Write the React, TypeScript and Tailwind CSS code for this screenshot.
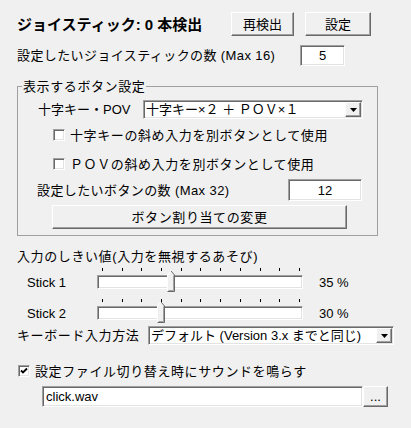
import React from "react";

const raised =
  "border border-t-white border-l-white border-b-[#696969] border-r-[#696969] bg-[#f0f0f0] shadow-[inset_-1px_-1px_0_#a0a0a0]";
const sunken =
  "border border-t-[#a0a0a0] border-l-[#a0a0a0] border-b-white border-r-white bg-white shadow-[inset_1px_1px_0_#696969,inset_-1px_-1px_0_#e3e3e3]";

function WinButton({ label, className }: { label: string; className: string }) {
  return (
    <button className={`${raised} ${className} flex items-center justify-center text-[13px] leading-none`}>
      {label}
    </button>
  );
}

function TextBox({ value, className, center }: { value: string; className: string; center?: boolean }) {
  return (
    <div className={`${sunken} ${className} flex items-center px-[3px] text-[13px] leading-none ${center ? "justify-center" : ""}`}>
      {value}
    </div>
  );
}

function Combo({ value, className }: { value: string; className: string }) {
  return (
    <div className={`${sunken} ${className} flex items-stretch p-[1px]`}>
      <div className="flex-1 flex items-center pl-[1px] text-[13px] leading-none whitespace-nowrap overflow-hidden">{value}</div>
      <div className={`${raised} w-[16px] flex items-center justify-center`}>
        <svg width="7" height="4" viewBox="0 0 7 4">
          <path d="M0 0H7L3.5 4Z" fill="#000" />
        </svg>
      </div>
    </div>
  );
}

function CheckBox({ checked, label, className }: { checked?: boolean; label: string; className: string }) {
  return (
    <div className={`flex items-center h-[14px] ${className}`}>
      <div className={`${sunken} w-[12px] h-[12px] flex items-center justify-center`}>
        {checked && (
          <svg width="8" height="8" viewBox="0 0 8 8">
            <path d="M1 3.5L3 5.5L7 1.5" stroke="#000" strokeWidth="1.8" fill="none" />
          </svg>
        )}
      </div>
      <span className="ml-[5px] text-[13px] leading-none tracking-[0.6px] whitespace-nowrap">{label}</span>
    </div>
  );
}

function Slider({ value }: { value: number }) {
  const left = 5 + (value / 100) * 197 - 4;
  return (
    <div className="relative w-[206px]">
      <div className="flex justify-between pl-[5px] pr-[3px] h-[4px]">
        {Array.from({ length: 11 }).map((_, i) => (
          <div key={i} className="w-[1px] h-[3px] mt-[1px] bg-black" />
        ))}
      </div>
      <div className={`${sunken} mt-[4px] h-[14px]`} />
      <svg className="absolute top-[3px]" style={{ left }} width="8" height="22" viewBox="0 0 8 22">
        <path d="M0.5 21.5V5L4 1L7.5 5V21.5Z" fill="#f0f0f0" />
        <path d="M0.5 21V5L4 1" stroke="#fff" fill="none" />
        <path d="M4 1L7.5 5V21.5H0.5" stroke="#696969" fill="none" />
        <path d="M6.5 5.5V20.5H1.5" stroke="#a0a0a0" fill="none" />
      </svg>
    </div>
  );
}

export default function App() {
  return (
    <div className="w-[411px] h-[428px] bg-[#f0f0f0] overflow-hidden text-black font-['Liberation_Sans','Noto_Sans_CJK_JP',sans-serif] flex flex-col">
      <div className="mt-[12px] ml-[17px] h-[24px] flex items-center">
        <span className="w-[214px] text-[15px] font-bold leading-none whitespace-nowrap">ジョイスティック: 0 本検出</span>
        <WinButton label="再検出" className="w-[63px] h-[24px]" />
        <WinButton label="設定" className="ml-[11px] w-[66px] h-[24px]" />
      </div>

      <div className="mt-[9px] ml-[17px] h-[21px] flex items-center">
        <span className="w-[283px] text-[13px] leading-none tracking-[0.4px] whitespace-nowrap">設定したいジョイスティックの数 (Max 16)</span>
        <TextBox value="5" center className="w-[45px] h-[21px]" />
      </div>

      <fieldset className="mt-[14px] ml-[17px] w-[361px] border border-[#a0a0a0] pb-[6px]">
        <legend className="ml-[4px] px-[1px] text-[13px] leading-[13px] tracking-[0.6px]">表示するボタン設定</legend>
        <div className="mt-[7px] pl-[20px] h-[19px] flex items-center">
          <span className="w-[105px] text-[13px] leading-none whitespace-nowrap">十字キー・POV</span>
          <Combo value="十字キー×２ ＋ ＰＯＶ×１" className="w-[220px] h-[19px]" />
        </div>
        <CheckBox label="十字キーの斜め入力を別ボタンとして使用" className="mt-[9px] ml-[35px]" />
        <CheckBox label="ＰＯＶの斜め入力を別ボタンとして使用" className="mt-[15px] ml-[35px]" />
        <div className="mt-[8px] pl-[19px] h-[22px] flex items-center">
          <span className="w-[251px] text-[13px] leading-none tracking-[0.4px] whitespace-nowrap">設定したいボタンの数 (Max 32)</span>
          <TextBox value="12" center className="w-[74px] h-[22px]" />
        </div>
        <WinButton label="ボタン割り当ての変更" className="mt-[4px] ml-[34px] w-[295px] h-[24px] tracking-[0.6px]" />
      </fieldset>

      <div className="mt-[13px] ml-[17px] h-[14px] flex items-center text-[13px] leading-none tracking-[0.6px] whitespace-nowrap">
        入力のしきい値(入力を無視するあそび)
      </div>

      <div className="mt-[4px] ml-[27px] flex items-end">
        <span className="w-[70px] h-[14px] flex items-center text-[13px] leading-none">Stick 1</span>
        <Slider value={35} />
        <span className="ml-[16px] h-[14px] flex items-center text-[13px] leading-none">35 %</span>
      </div>

      <div className="mt-[9px] ml-[27px] flex items-end">
        <span className="w-[70px] h-[14px] flex items-center text-[13px] leading-none">Stick 2</span>
        <Slider value={30} />
        <span className="ml-[16px] h-[14px] flex items-center text-[13px] leading-none">30 %</span>
      </div>

      <div className="mt-[6px] ml-[17px] h-[19px] flex items-center">
        <span className="w-[131px] text-[13px] leading-none tracking-[0.6px] whitespace-nowrap">キーボード入力方法</span>
        <Combo value="デフォルト (Version 3.x までと同じ)" className="w-[246px] h-[19px]" />
      </div>

      <CheckBox checked label="設定ファイル切り替え時にサウンドを鳴らす" className="mt-[19px] ml-[18px]" />

      <div className="mt-[8px] ml-[42px] h-[21px] flex">
        <TextBox value="click.wav" className="w-[321px] h-[21px]" />
        <WinButton label="..." className="w-[25px] h-[21px] text-[11px]" />
      </div>
    </div>
  );
}
